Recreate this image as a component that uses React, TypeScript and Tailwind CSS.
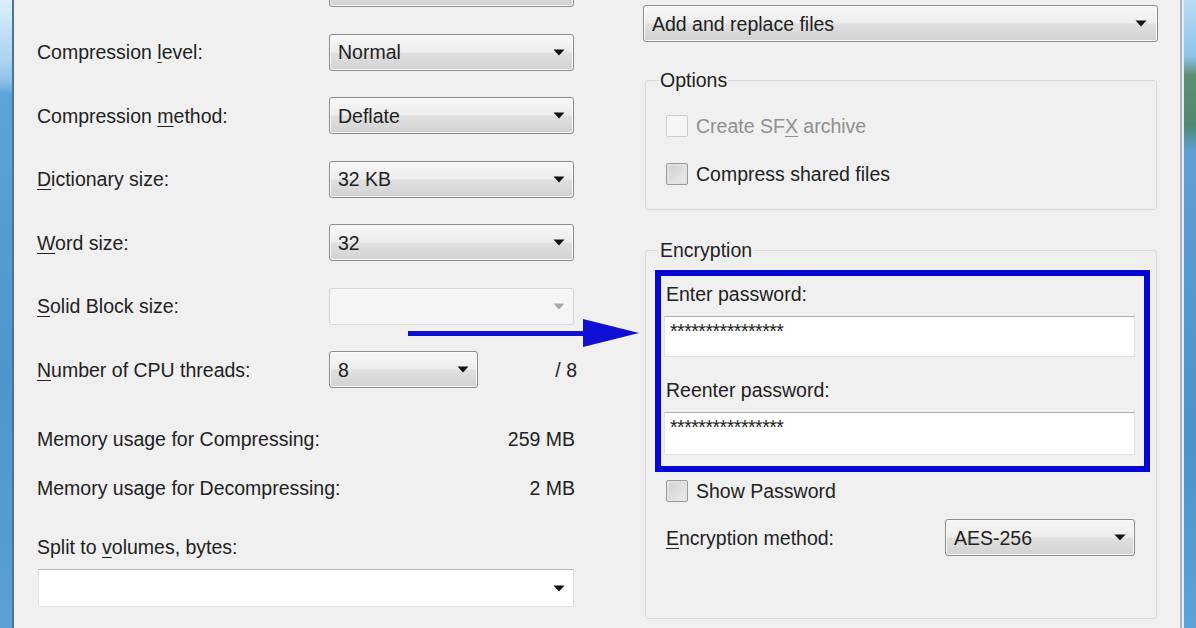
import React from 'react';

function Arrow({ disabled }: { disabled?: boolean }) {
  return (
    <svg width="12" height="7" viewBox="0 0 12 7" className="shrink-0">
      <path d="M0.5 0.5 H11.5 L6 6.5 Z" fill={disabled ? '#a8a8a8' : '#111'} />
    </svg>
  );
}

function Combo({
  value,
  className = '',
  disabled,
}: {
  value?: string;
  className?: string;
  disabled?: boolean;
}) {
  return (
    <div
      className={`flex items-center h-[37px] rounded-[3px] border pl-[8px] pr-[8px] ${
        disabled
          ? 'border-[#d6d6d6] bg-[#f5f5f5]'
          : 'border-[#8a8c8e] bg-[linear-gradient(to_bottom,#f7f7f7_0%,#ededed_48%,#e0e0e0_52%,#d2d2d2_100%)] shadow-[inset_0_0_0_1px_#fafafa]'
      } ${className}`}
    >
      <span className="flex-1 truncate">{value}</span>
      <Arrow disabled={disabled} />
    </div>
  );
}

function Check({ label, disabled }: { label: React.ReactNode; disabled?: boolean }) {
  return (
    <div className="flex items-center h-[24px] ml-[11px]">
      <div
        className={`w-[22px] h-[22px] rounded-[2px] border ${
          disabled
            ? 'border-[#cdcdcd] bg-[#f6f6f6]'
            : 'border-[#9a9a9a] bg-[linear-gradient(to_bottom_right,#cfcfcf,#ededed)] shadow-[inset_0_0_0_2px_#e2e2e2]'
        }`}
      />
      <span className={`ml-[8px] ${disabled ? 'text-[#8f8f8f]' : ''}`}>{label}</span>
    </div>
  );
}

function TextBox({ value, className = '' }: { value: string; className?: string }) {
  return (
    <div className={`w-[471px] bg-white border border-[#dfe3ea] border-t-[#a9adb5] pl-[5px] pt-[2px] leading-[24px] tracking-[-0.5px] ${className}`}>
      {value}
    </div>
  );
}

function Row({ label, value, disabled }: { label?: React.ReactNode; value?: string; disabled?: boolean }) {
  return (
    <div className="flex items-center h-[37px]">
      <div className="w-[292px]">{label}</div>
      <Combo value={value} disabled={disabled} className="w-[245px]" />
    </div>
  );
}

const u = (c: string) => <span className="underline underline-offset-[3px] decoration-1">{c}</span>;

export default function App() {
  const dots = '****************';

  return (
    <div className="relative flex h-[628px] w-[1196px] overflow-hidden font-['Liberation_Sans',Arial,sans-serif] text-[19.5px] leading-[24px] text-[#222]">
      {/* window frame, left */}
      <div className="w-[12px] bg-[linear-gradient(to_bottom,#dcefff_0%,#a8d2f0_10%,#8cc0e6_13%,#5aa4d8_15%,#4d95cd_60%,#5aa0d6_100%)]" />
      <div className="w-[2px] bg-[#52718a]" />

      {/* dialog body */}
      <div className="flex flex-1 bg-[#f0f0f0]">
        {/* left column */}
        <div className="w-[540px] ml-[23px] flex flex-col">
          <div className="flex flex-col gap-[26.5px] mt-[-30px]">
            <Row />
            <Row label={<>Compression {u('l')}evel:</>} value="Normal" />
            <Row label={<>Compression {u('m')}ethod:</>} value="Deflate" />
            <Row label={<>{u('D')}ictionary size:</>} value="32 KB" />
            <Row label={<>{u('W')}ord size:</>} value="32" />
            <Row label={<>{u('S')}olid Block size:</>} disabled />
            <div className="flex items-center h-[37px]">
              <div className="w-[292px]">{u('N')}umber of CPU threads:</div>
              <Combo value="8" className="w-[149px]" />
              <div className="flex-1 text-right">/ 8</div>
            </div>
          </div>

          <div className="flex justify-between mt-[39px] pr-[2px]">
            <span>Memory usage for Compressing:</span>
            <span>259 MB</span>
          </div>
          <div className="flex justify-between mt-[25px] pr-[2px]">
            <span>Memory usage for Decompressing:</span>
            <span>2 MB</span>
          </div>

          <div className="mt-[35px]">Split to {u('v')}olumes, bytes:</div>
          <div className="mt-[10px] ml-[1px] w-[536px] h-[38px] flex items-center justify-end pr-[8px] bg-white border border-[#dfe2e6] border-t-[#b5b9bf]">
            <Arrow />
          </div>
        </div>

        {/* right column */}
        <div className="w-[515px] ml-[66px] pt-[5px] flex flex-col">
          <Combo value="Add and replace files" className="w-[515px] pr-[10px]" />

          <fieldset className="mt-[26px] ml-[2px] w-[512px] border border-[#dadada] rounded-[3px] px-[9px] pb-[23px]">
            <legend className="ml-[4px] px-[1px]">Options</legend>
            <div className="mt-[22px]">
              <Check disabled label={<>Create SF{u('X')} archive</>} />
            </div>
            <div className="mt-[24px]">
              <Check label="Compress shared files" />
            </div>
          </fieldset>

          <fieldset className="mt-[28px] ml-[2px] w-[512px] border border-[#dadada] rounded-[3px] pl-[9px] pr-[6px] pb-[62px]">
            <legend className="ml-[4px] px-[1px]">Encryption</legend>
            <div className="mt-[8px] border-[6px] border-[#0606d6] pl-[3px] pt-[6px] pb-[11px]">
              <div className="pl-[2px]">Enter password:</div>
              <div className="mt-[10px]">
                <TextBox value={dots} className="h-[41px]" />
              </div>
              <div className="pl-[2px] mt-[21px]">Reenter password:</div>
              <div className="mt-[10px]">
                <TextBox value={dots} className="h-[43px]" />
              </div>
            </div>
            <div className="mt-[7px]">
              <Check label="Show Password" />
            </div>
            <div className="flex items-center mt-[16px]">
              <div className="flex-1 pl-[11px]">{u('E')}ncryption method:</div>
              <Combo value="AES-256" className="w-[190px] mr-[15px]" />
            </div>
          </fieldset>
        </div>
      </div>

      {/* window frame, right */}
      <div className="w-[2px] bg-[#a7b3bf]" />
      <div className="w-[2px] bg-[#e8eef3]" />
      <div className="w-[12px] bg-[linear-gradient(to_bottom,#b9dcf4_0%,#8dc2ea_9%,#5f8f72_12%,#4f8a70_20%,#5d9fd4_24%,#4a92cc_70%,#5aa2d8_100%)]" />

      {/* annotation arrow */}
      <svg className="absolute left-[406px] top-[316px]" width="236" height="34" viewBox="0 0 236 34">
        <rect x="2" y="15" width="180" height="5" fill="#1010d4" />
        <polygon points="177,3 233,17 177,31" fill="#1010d4" />
      </svg>
    </div>
  );
}
